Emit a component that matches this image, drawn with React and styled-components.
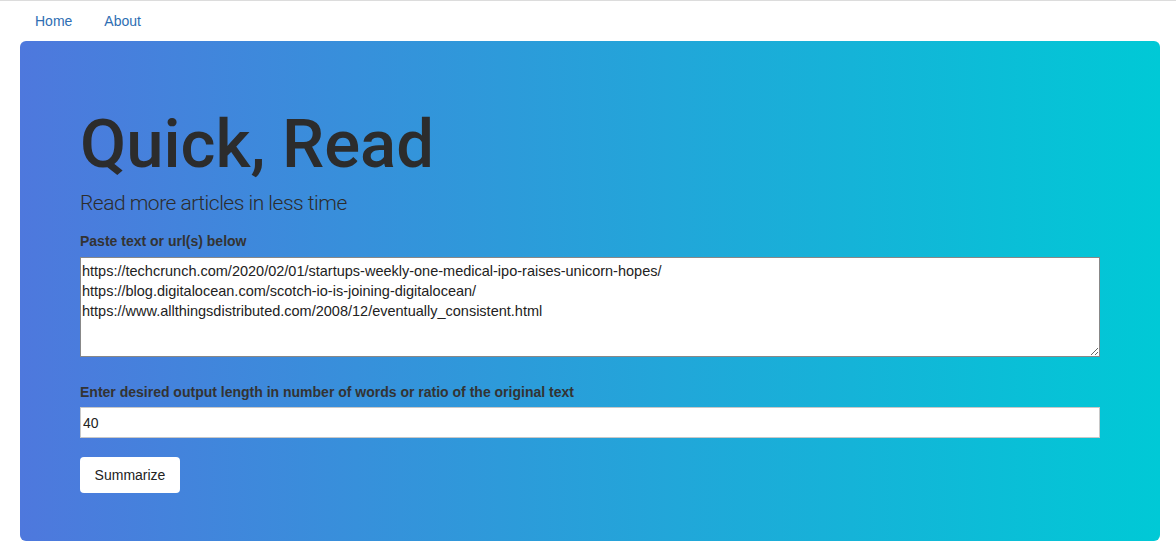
import styled, { createGlobalStyle } from "styled-components";

const GlobalStyle = createGlobalStyle`
  html, body {
    margin: 0;
    padding: 0;
    background: #fff;
    font-family: "Liberation Sans", Arial, sans-serif;
    font-size: 14px;
    color: #333;
  }
  * { box-sizing: border-box; }
`;

const Page = styled.div`
  border-top: 1px solid #dcdcdc;
  padding: 0 16px 19px 20px;
`;

const Nav = styled.nav`
  display: flex;
  gap: 32px;
  height: 40px;
  align-items: center;
  padding-left: 15px;
`;

const NavLink = styled.a`
  color: #2e6eb3;
  text-decoration: none;
  font-size: 14px;
`;

const Jumbotron = styled.section`
  border-radius: 6px;
  background: linear-gradient(to right, #4e78dd, #00c9d6);
  padding: 48px 60px 48px 60px;
  height: 500px;
`;

const Title = styled.h1`
  margin: 19px 0 7px;
  font-family: Roboto, "Liberation Sans", sans-serif;
  font-size: 67px;
  line-height: 1.1;
  font-weight: 500;
  color: #2c2c2c;
`;

const Lead = styled.p`
  margin: 0 0 15px;
  font-family: Roboto, "Liberation Sans", sans-serif;
  font-weight: 300;
  font-size: 21px;
  line-height: 1.4;
  letter-spacing: -0.5px;
  color: #2c2c2c;
`;

const Field = styled.div`
  display: flex;
  flex-direction: column;
  margin-bottom: ${(p) => p.$gap || 15}px;
`;

const Label = styled.label`
  font-weight: 700;
  font-size: 14px;
  color: #333;
  margin-bottom: ${(p) => p.$gap || 7}px;
`;

const Area = styled.textarea`
  width: 100%;
  height: 100px;
  border: 1px solid #888;
  padding: 3px 1px 2px;
  font-family: "Liberation Sans", Arial, sans-serif;
  font-size: 14.5px;
  line-height: 20px;
  color: #222;
  resize: vertical;
  display: block;
`;

const Input = styled.input`
  width: 100%;
  height: 31px;
  border: 1px solid #c8c8c8;
  padding: 0 2px;
  font-family: "Liberation Sans", Arial, sans-serif;
  font-size: 14px;
  color: #222;
`;

const Button = styled.button`
  width: 100px;
  height: 36px;
  border: none;
  border-radius: 4px;
  background: #fff;
  font-family: "Liberation Sans", Arial, sans-serif;
  font-size: 14px;
  color: #222;
`;

const urls = `https://techcrunch.com/2020/02/01/startups-weekly-one-medical-ipo-raises-unicorn-hopes/
https://blog.digitalocean.com/scotch-io-is-joining-digitalocean/
https://www.allthingsdistributed.com/2008/12/eventually_consistent.html`;

export default function App() {
  return (
    <Page>
      <GlobalStyle />
      <Nav>
        <NavLink href="#">Home</NavLink>
        <NavLink href="#">About</NavLink>
      </Nav>
      <Jumbotron>
        <Title>Quick, Read</Title>
        <Lead>Read more articles in less time</Lead>
        <Field $gap={27}>
          <Label $gap={8}>Paste text or url(s) below</Label>
          <Area defaultValue={urls} />
        </Field>
        <Field $gap={19}>
          <Label>Enter desired output length in number of words or ratio of the original text</Label>
          <Input defaultValue="40" />
        </Field>
        <Button>Summarize</Button>
      </Jumbotron>
    </Page>
  );
}
